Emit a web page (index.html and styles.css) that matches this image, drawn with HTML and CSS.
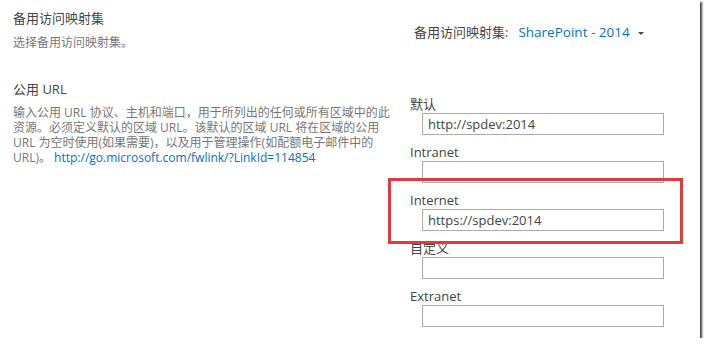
FILE: index.html
```
<!DOCTYPE html>
<html lang="zh-CN">
<head>
  <meta charset="UTF-8" />
  <title>备用访问映射</title>
  <link rel="stylesheet" href="styles.css">
</head>
<body>

<div class="frame">
  <!-- 备用访问映射集 -->
  <div class="row row-top">
    <div class="desc-col">
      <div class="sec-title">备用访问映射集</div>
      <div class="sec-sub">选择备用访问映射集。</div>
    </div>
    <div class="body-col">
      <div class="aam-select">
        <span class="aam-label">备用访问映射集:</span>
        <span class="aam-value">SharePoint - 2014</span>
        <span class="caret"></span>
      </div>
    </div>
  </div>

  <!-- 公用 URL -->
  <div class="row row-urls">
    <div class="desc-col">
      <div class="sec-title">公用 URL</div>
      <div class="sec-text">输入公用 URL 协议、主机和端口，用于所列出的任何或所有区域中的此<br>资源。必须定义默认的区域 URL。该默认的区域 URL 将在区域的公用<br>URL 为空时使用(如果需要)，以及用于管理操作(如配额电子邮件中的<br>URL)。 <a href="#">http://go.microsoft.com/fwlink/?LinkId=114854</a></div>
    </div>
    <div class="body-col">
      <div class="zone">
        <div class="zone-label">默认</div>
        <input class="zone-input" type="text" value="http://spdev:2014">
      </div>
      <div class="zone">
        <div class="zone-label">Intranet</div>
        <input class="zone-input" type="text" value="">
      </div>
      <div class="zone">
        <div class="zone-label">Internet</div>
        <input class="zone-input" type="text" value="https://spdev:2014">
      </div>
      <div class="zone">
        <div class="zone-label">自定义</div>
        <input class="zone-input" type="text" value="">
      </div>
      <div class="zone">
        <div class="zone-label">Extranet</div>
        <input class="zone-input" type="text" value="">
      </div>
    </div>
  </div>

  <!-- 标注框 -->
  <div class="highlight"></div>
</div>

</body>
</html>
```

FILE: styles.css
```
body { margin: 0; background: #fff; font-family: "Open Sans", "Noto Sans CJK SC", sans-serif; color: #444; }
.frame {
  position: relative;
  width: 700px;
  height: 338px;
  background: #fff;
  box-shadow: 2px 2px 2px rgba(0,0,0,0.75);
  overflow: hidden;
}
.row { display: flex; }
.row-top { height: 80px; }
.desc-col { width: 372px; padding-left: 13px; }
.body-col { flex: 1; padding-left: 25px; }

.row-top .desc-col { padding-top: 9px; }
.row-top .body-col { padding-top: 22px; padding-left: 29px; }
.row-urls .body-col { padding-top: 15px; }

.sec-title { font-size: 13px; line-height: 18px; color: #444; }
.sec-sub { margin-top: 8px; font-size: 12px; line-height: 16px; color: #777; }
.sec-text { margin-top: 7px; font-size: 12px; line-height: 15px; color: #777; white-space: nowrap; }
.sec-text a { color: #0072c6; text-decoration: none; }

.aam-select { display: flex; align-items: center; font-size: 13px; line-height: 20px; }
.aam-label { color: #444; margin-right: 10px; }
.aam-value { color: #0072c6; font-size: 13.5px; }
.caret { margin-left: 8px; margin-top: 2px; border-left: 3px solid transparent; border-right: 3px solid transparent; border-top: 3px solid #444; }

.zone { margin-bottom: 8px; }
.zone-label { font-size: 13px; line-height: 18px; color: #444; }
.zone-input {
  display: block;
  box-sizing: border-box;
  margin: 0 0 0 12px;
  width: 242px;
  height: 22px;
  padding: 0 5px;
  border: 1px solid #ababab;
  font-family: "Open Sans", sans-serif;
  font-size: 13px;
  color: #444;
  outline: none;
}

.highlight {
  position: absolute;
  left: 388px;
  top: 178px;
  width: 295px;
  height: 66px;
  box-sizing: border-box;
  border: 3px solid #e0393e;
}
```
